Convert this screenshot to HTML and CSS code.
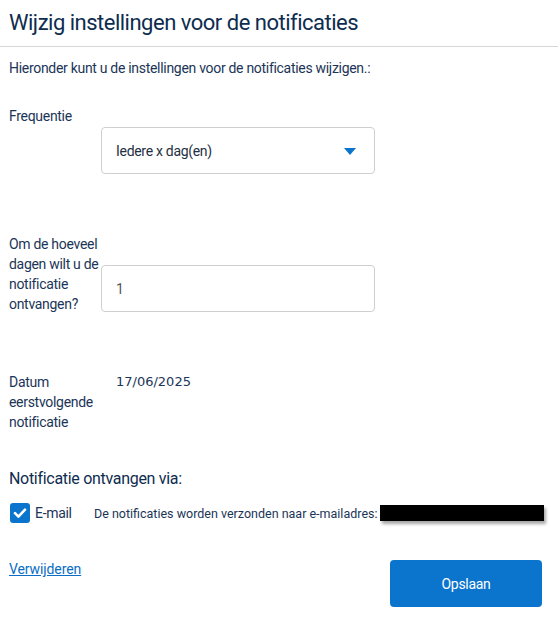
FILE: index.html
```html
<!DOCTYPE html>
<html lang="nl">
<head>
<meta charset="utf-8">
<title>Wijzig instellingen voor de notificaties</title>
<link rel="stylesheet" href="styles.css">
</head>
<body>
<div class="page">
  <h1 class="title">Wijzig instellingen voor de notificaties</h1>
  <p class="intro">Hieronder kunt u de instellingen voor de notificaties wijzigen.:</p>

  <div class="row row-freq">
    <label class="label">Frequentie</label>
    <div class="field field-select">
      <div class="select">
        <span class="select-text">Iedere x dag(en)</span>
        <span class="arrow"></span>
      </div>
    </div>
  </div>

  <div class="row row-days">
    <label class="label">Om de hoeveel dagen wilt u de notificatie ontvangen?</label>
    <div class="field field-input">
      <div class="input">1</div>
    </div>
  </div>

  <div class="row row-date">
    <div class="label">Datum eerstvolgende notificatie</div>
    <div class="value">17/06/2025</div>
  </div>

  <h2 class="subtitle">Notificatie ontvangen via:</h2>

  <div class="channel">
    <span class="checkbox">
      <svg viewBox="0 0 20 20" width="20" height="20"><path d="M5 10.2 L8.4 13.6 L15 6.6" fill="none" stroke="#fff" stroke-width="2.6" stroke-linecap="round" stroke-linejoin="round"/></svg>
    </span>
    <span class="channel-name">E-mail</span>
    <span class="channel-note">De notificaties worden verzonden naar e-mailadres:</span>
    <span class="redacted"></span>
  </div>

  <div class="actions">
    <a class="link" href="#">Verwijderen</a>
    <button class="btn" type="button">Opslaan</button>
  </div>
</div>
</body>
</html>
```
FILE: styles.css
```css
html, body { margin: 0; padding: 0; background: #fff; }
body {
  font-family: Roboto, "Open Sans", sans-serif;
  color: #1b3557;
  font-size: 14px;
  letter-spacing: -0.3px;
}
.page { width: 558px; }
.title {
  margin: 0;
  padding: 8px 9px 8px;
  font-size: 22px;
  line-height: 30px;
  font-weight: 400;
  letter-spacing: -0.5px;
  color: #0e2c4f;
  border-bottom: 1px solid #d7d7d7;
}
.intro {
  margin: 11px 0 0;
  padding-left: 9px;
  line-height: 20px;
}
.row {
  display: grid;
  grid-template-columns: 92px 274px;
  align-items: start;
  padding-left: 9px;
}
.label { line-height: 20px; display: block; width: 96px; }
.row-freq { margin-top: 28px; }
.row-days { margin-top: 60px; }
.row-date { margin-top: 58px; }
.field-select { margin-top: 21px; }
.field-input { margin-top: 31px; }
.select, .input {
  box-sizing: border-box;
  height: 47px;
  border: 1px solid #cfcfcf;
  border-radius: 4px;
  display: flex;
  align-items: center;
  padding: 0 18px 0 14px;
  background: #fff;
}
.select { justify-content: space-between; color: #1f2f44; }
.input { color: #555; }
.arrow {
  width: 0; height: 0;
  border-left: 6px solid transparent;
  border-right: 6px solid transparent;
  border-top: 7px solid #0b74cc;
  margin-top: 2px;
}
.value {
  font-family: "DejaVu Sans", Verdana, sans-serif;
  font-size: 13px;
  line-height: 20px;
  letter-spacing: 0;
  padding-left: 15px;
  color: #1b3557;
}
.subtitle {
  margin: 35px 0 0;
  padding-left: 9px;
  font-size: 16px;
  line-height: 24px;
  font-weight: 400;
  letter-spacing: -0.3px;
  color: #0e2c4f;
}
.channel {
  display: flex;
  align-items: center;
  margin-top: 12px;
  padding-left: 10px;
  height: 20px;
}
.checkbox {
  width: 20px; height: 20px;
  border-radius: 3px;
  background: #0b74cc;
  display: inline-flex;
}
.channel-name { margin-left: 5px; width: 59px; }
.channel-note { font-size: 12.5px; letter-spacing: 0; }
.redacted {
  width: 164px; height: 16px;
  background: #000;
  margin-left: 2px;
  box-shadow: 2px 3px 3px rgba(0,0,0,0.35);
}
.actions {
  display: flex;
  justify-content: space-between;
  align-items: flex-start;
  width: 533px;
  padding-left: 9px;
  margin-top: 37px;
}
.link {
  color: #0b6ec4;
  text-decoration: underline;
  line-height: 20px;
  margin-top: -1px;
  letter-spacing: -0.1px;
}
.btn {
  width: 152px; height: 47px;
  border: 0;
  border-radius: 4px;
  background: #0b74cc;
  color: #fff;
  font-family: inherit;
  font-size: 14px;
  letter-spacing: inherit;
  cursor: pointer;
}
```
